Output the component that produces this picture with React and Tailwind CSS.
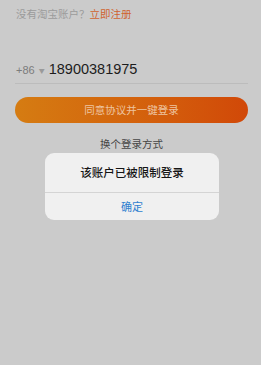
import React from "react";

const App = () => {
  return (
    <div
      className="relative w-[261px] h-[365px] overflow-hidden bg-[#cbcbcb]"
      style={{ fontFamily: '"Noto Sans CJK SC", "Liberation Sans", sans-serif' }}
    >
      <div className="pl-[15px] pr-[13px] pt-[6px]">
        <p className="pl-px text-[10.5px] leading-[16px] text-[#9b9b9b]">
          没有淘宝账户？<span className="text-[#d0632f]">立即注册</span>
        </p>

        <div className="mt-[36px] flex items-center h-[24px] border-b border-[#bcbcbc] pb-[1px] pl-px box-content">
          <span className="text-[11px] text-[#7c7c7c]" style={{ fontFamily: '"Liberation Sans", sans-serif' }}>
            +86
          </span>
          <span className="ml-[4px] text-[6px] text-[#9a9a9a]">▼</span>
          <span
            className="ml-[4px] -mt-[3px] text-[14.5px] leading-[20px] text-[#1c1c1c]"
            style={{ fontFamily: '"Liberation Sans", sans-serif' }}
          >
            18900381975
          </span>
        </div>

        <button className="mt-[13px] w-full h-[26px] rounded-full bg-gradient-to-r from-[#d57c12] to-[#d14808] text-[10.5px] text-[#eec4a0] flex items-center justify-center">
          同意协议并一键登录
        </button>

        <p className="mt-[13px] text-center text-[10.5px] leading-[16px] text-[#454545]">
          换个登录方式
        </p>
      </div>

      <div className="absolute left-[45px] top-[153px] w-[174px] rounded-[9px] bg-[#f0f0f0] flex flex-col">
        <div className="h-[39px] flex items-center justify-center text-[11.5px] font-medium text-[#151515]">
          该账户已被限制登录
        </div>
        <div className="h-px bg-[#d4d4d4]" />
        <div className="h-[27px] flex items-center justify-center text-[11px] text-[#2f7fcf]">
          确定
        </div>
      </div>
    </div>
  );
};

export default App;
